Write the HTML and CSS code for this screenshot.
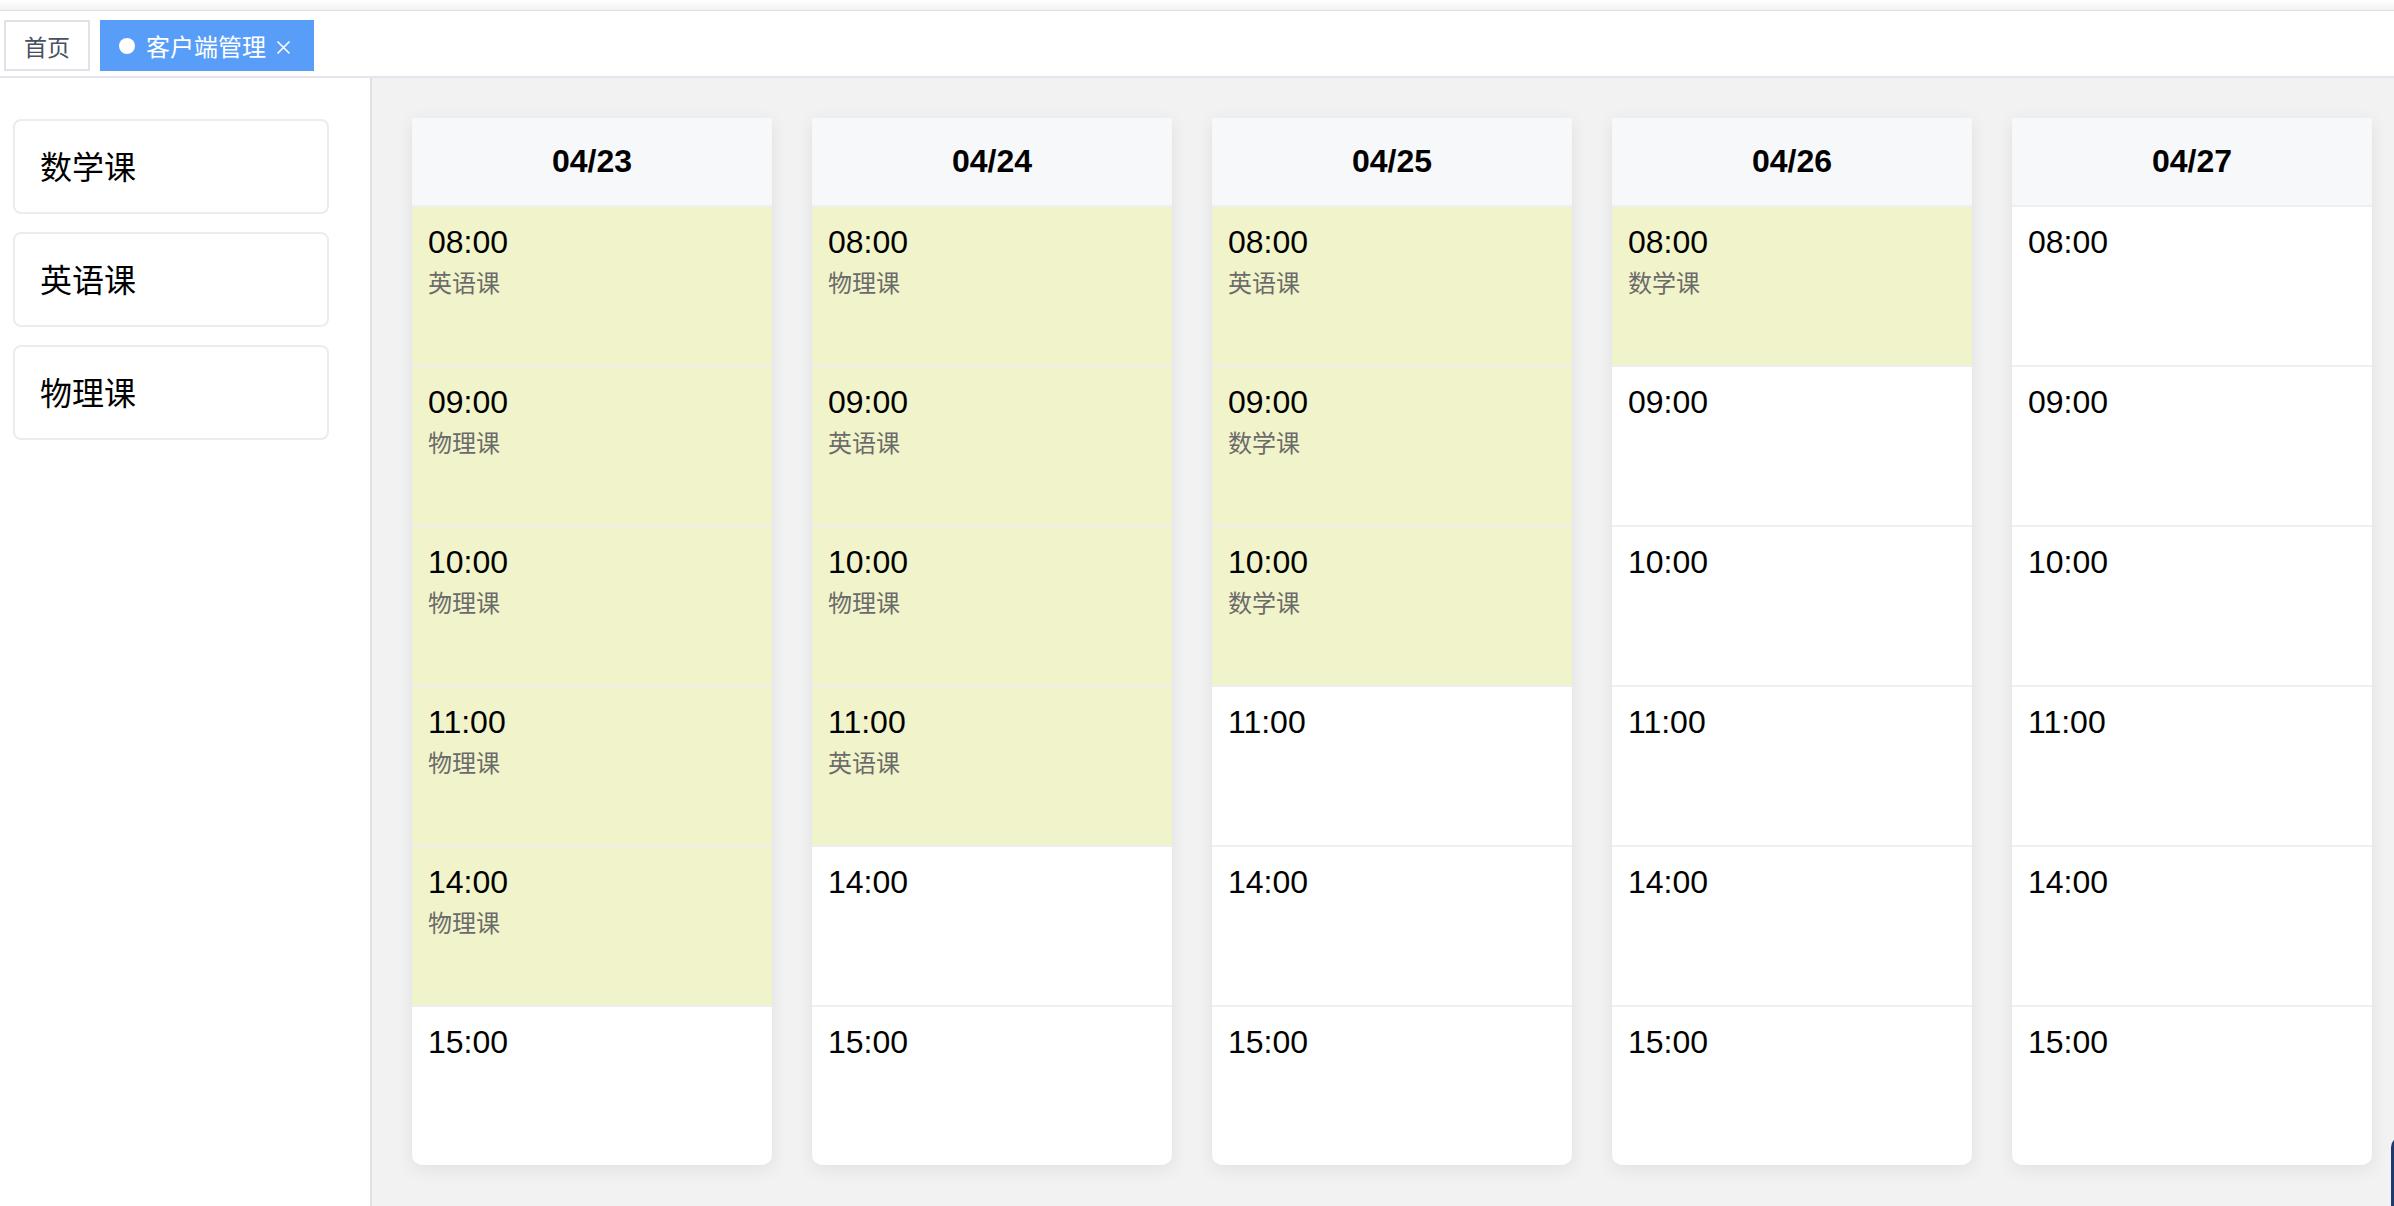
FILE: index.html
```html
<!DOCTYPE html>
<html lang="zh-CN">
<head>
    <meta charset="UTF-8">
    <meta name="viewport" content="width=device-width, initial-scale=1.0">
    <title>客户端管理</title>
    <link rel="stylesheet" href="styles.css">
</head>
<body>
    <div class="navbar"></div>
    <div class="tags-view">
        <a class="tag" href="#">首页</a>
        <a class="tag active" href="#"><span class="dot"></span>客户端管理<svg class="close" width="15" height="15" viewBox="0 0 15 15"><path d="M1.5 1.5 L13.5 13.5 M13.5 1.5 L1.5 13.5" stroke="#fff" stroke-width="1.6" fill="none"/></svg></a>
    </div>
    <div class="layout">
        <div class="sidebar">
            <div class="course">数学课</div>
            <div class="course">英语课</div>
            <div class="course">物理课</div>
        </div>
        <div class="main">
            <div class="day">
                <div class="day-head">04/23</div>
                <div class="slot booked"><div class="time">08:00</div><div class="name">英语课</div></div>
                <div class="slot booked"><div class="time">09:00</div><div class="name">物理课</div></div>
                <div class="slot booked"><div class="time">10:00</div><div class="name">物理课</div></div>
                <div class="slot booked"><div class="time">11:00</div><div class="name">物理课</div></div>
                <div class="slot booked"><div class="time">14:00</div><div class="name">物理课</div></div>
                <div class="slot"><div class="time">15:00</div></div>
            </div>
            <div class="day">
                <div class="day-head">04/24</div>
                <div class="slot booked"><div class="time">08:00</div><div class="name">物理课</div></div>
                <div class="slot booked"><div class="time">09:00</div><div class="name">英语课</div></div>
                <div class="slot booked"><div class="time">10:00</div><div class="name">物理课</div></div>
                <div class="slot booked"><div class="time">11:00</div><div class="name">英语课</div></div>
                <div class="slot"><div class="time">14:00</div></div>
                <div class="slot"><div class="time">15:00</div></div>
            </div>
            <div class="day">
                <div class="day-head">04/25</div>
                <div class="slot booked"><div class="time">08:00</div><div class="name">英语课</div></div>
                <div class="slot booked"><div class="time">09:00</div><div class="name">数学课</div></div>
                <div class="slot booked"><div class="time">10:00</div><div class="name">数学课</div></div>
                <div class="slot"><div class="time">11:00</div></div>
                <div class="slot"><div class="time">14:00</div></div>
                <div class="slot"><div class="time">15:00</div></div>
            </div>
            <div class="day">
                <div class="day-head">04/26</div>
                <div class="slot booked"><div class="time">08:00</div><div class="name">数学课</div></div>
                <div class="slot"><div class="time">09:00</div></div>
                <div class="slot"><div class="time">10:00</div></div>
                <div class="slot"><div class="time">11:00</div></div>
                <div class="slot"><div class="time">14:00</div></div>
                <div class="slot"><div class="time">15:00</div></div>
            </div>
            <div class="day">
                <div class="day-head">04/27</div>
                <div class="slot"><div class="time">08:00</div></div>
                <div class="slot"><div class="time">09:00</div></div>
                <div class="slot"><div class="time">10:00</div></div>
                <div class="slot"><div class="time">11:00</div></div>
                <div class="slot"><div class="time">14:00</div></div>
                <div class="slot"><div class="time">15:00</div></div>
            </div>
            <div class="float-btn"></div>
        </div>
    </div>
</body>
</html>
```

FILE: styles.css
```css
html {
  box-sizing: border-box;
}

*,
*:before,
*:after {
  box-sizing: inherit;
}

body {
  margin: 0;
  height: 1206px;
  overflow: hidden;
  background: #fff;
  font-family: "Liberation Sans", "Noto Sans CJK SC", sans-serif;
  color: #000;
}

.navbar {
  height: 11px;
  background: linear-gradient(#fff, #f3f3f5);
  border-bottom: 1px solid #dcdfe6;
}

.tags-view {
  display: flex;
  align-items: flex-start;
  gap: 10px;
  height: 67px;
  padding: 9px 0 0 4px;
  border-bottom: 2px solid #e4e4ec;
}
.tags-view .tag {
  display: flex;
  align-items: center;
  height: 51px;
  padding: 0 18px;
  border: 2px solid #e0e2e8;
  font-size: 23px;
  color: #495060;
  text-decoration: none;
}
.tags-view .tag.active {
  padding: 0 21px 0 17px;
  border-color: #589ef8;
  background: #589ef8;
  color: #fff;
  font-size: 24px;
}
.tags-view .dot {
  width: 16px;
  height: 16px;
  margin-right: 11px;
  border-radius: 50%;
  background: #fff;
}
.tags-view .close {
  margin: 4px 0 0 10px;
}

.layout {
  display: flex;
  height: 1128px;
}

.sidebar {
  display: flex;
  flex-direction: column;
  gap: 18px;
  width: 372px;
  padding: 41px 0 0 13px;
  border-right: 2px solid #e0e0e0;
}
.sidebar .course {
  display: flex;
  align-items: center;
  width: 316px;
  height: 95px;
  padding: 0 0 4px 25px;
  border: 2px solid #ececec;
  border-radius: 8px;
  font-size: 32px;
}

.main {
  position: relative;
  display: flex;
  align-items: flex-start;
  gap: 40px;
  flex: 1;
  padding: 40px 0 0 40px;
  background: #f2f2f2;
}

.day {
  flex: 0 0 360px;
  background: #fff;
  border-radius: 0 0 10px 10px;
  overflow: hidden;
  box-shadow: 0 4px 18px rgba(0, 0, 0, 0.08);
}
.day-head {
  height: 87px;
  line-height: 87px;
  text-align: center;
  background: #f7f8fa;
  font-size: 32px;
  font-weight: bold;
}
.slot {
  height: 160px;
  padding: 15px 16px 0;
  border-top: 2px solid #efefef;
}
.slot.booked {
  background: #f1f4ca;
}
.slot .time {
  font-size: 32px;
  line-height: 40px;
}
.slot .name {
  margin-top: 6px;
  font-size: 24px;
  line-height: 32px;
  color: #6b6b6b;
}

.float-btn {
  position: absolute;
  right: -40px;
  top: 1059px;
  width: 43px;
  height: 80px;
  border-radius: 10px 0 0 0;
  background: #1e3a6e;
}
```
